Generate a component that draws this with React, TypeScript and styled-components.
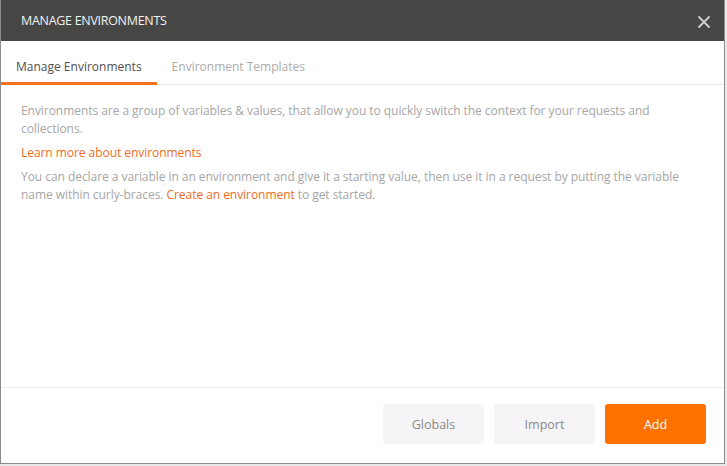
import { createGlobalStyle } from "styled-components";
import styled from "styled-components";
import { useState } from "react";

const GlobalStyle = createGlobalStyle`
  html, body {
    margin: 0;
    padding: 0;
    background: #e9e9ec;
  }
  body {
    font-family: "Open Sans", "Noto Sans", Arial, sans-serif;
  }
  * {
    box-sizing: border-box;
  }
`;

const Modal = styled.div`
  width: 725px;
  height: 464px;
  background: #ffffff;
  border: 1px solid #8c8c8c;
  border-top: none;
  display: flex;
  flex-direction: column;
`;

const Header = styled.div`
  height: 41px;
  flex-shrink: 0;
  background: #464744;
  display: flex;
  align-items: center;
  justify-content: space-between;
  padding: 0 12px 0 20px;
`;

const Title = styled.h1`
  margin: 0;
  font-size: 12.5px;
  font-weight: 400;
  color: #f2f2f2;
  letter-spacing: -0.3px;
`;

const CloseButton = styled.button`
  border: none;
  background: none;
  padding: 0;
  width: 16px;
  height: 16px;
  margin-top: 2px;
  display: flex;
  align-items: center;
  justify-content: center;
  cursor: pointer;
`;

const TabBar = styled.div`
  display: flex;
  border-bottom: 1px solid #e8e8e8;
  flex-shrink: 0;
`;

const Tab = styled.button<{ active?: boolean }>`
  border: none;
  background: none;
  font-family: inherit;
  font-size: 12px;
  padding: 17px 15px 0;
  height: 44px;
  color: ${({ active }) => (active ? "#505050" : "#ababab")};
  border-bottom: 3px solid ${({ active }) => (active ? "#f47023" : "transparent")};
  margin-bottom: -1px;
  display: flex;
  align-items: flex-start;
  cursor: pointer;
`;

const Content = styled.div`
  flex: 1;
  padding: 17px 20px 0 20px;
  font-size: 12px;
  color: #a6a6a6;
  line-height: 18px;
`;

const Paragraph = styled.p`
  margin: 0 0 6px;
  letter-spacing: -0.05px;
`;

const Link = styled.a`
  color: #f26b21;
  text-decoration: none;
  cursor: pointer;
`;

const Footer = styled.div`
  height: 76px;
  flex-shrink: 0;
  border-top: 1px solid #ededed;
  display: flex;
  justify-content: flex-end;
  align-items: flex-start;
  gap: 10px;
  padding: 16px 18px 0 0;
`;

const Button = styled.button<{ primary?: boolean }>`
  width: 101px;
  height: 40px;
  border: none;
  border-radius: 3px;
  font-family: inherit;
  font-size: 12.5px;
  cursor: pointer;
  background: ${({ primary }) => (primary ? "#fc7100" : "#f6f4f6")};
  color: ${({ primary }) => (primary ? "#ffffff" : "#8a8a8a")};
`;

const CloseIcon = () => (
  <svg width="12" height="12" viewBox="0 0 12 12">
    <path d="M1 1 L11 11 M11 1 L1 11" stroke="#cfcfcf" strokeWidth="1.8" strokeLinecap="round" />
  </svg>
);

export default function App() {
  const [tab, setTab] = useState(0);
  return (
    <>
      <GlobalStyle />
      <Modal>
        <Header>
          <Title>MANAGE ENVIRONMENTS</Title>
          <CloseButton aria-label="Close">
            <CloseIcon />
          </CloseButton>
        </Header>
        <TabBar>
          <Tab active={tab === 0} onClick={() => setTab(0)}>
            Manage Environments
          </Tab>
          <Tab active={tab === 1} onClick={() => setTab(1)}>
            Environment Templates
          </Tab>
        </TabBar>
        <Content>
          <Paragraph>
            Environments are a group of variables &amp; values, that allow you to quickly switch the
            context for your requests and collections.
          </Paragraph>
          <Paragraph>
            <Link>Learn more about environments</Link>
          </Paragraph>
          <Paragraph>
            You can declare a variable in an environment and give it a starting value, then use it in
            a request by putting the variable name within curly-braces.{" "}
            <Link>Create an environment</Link> to get started.
          </Paragraph>
        </Content>
        <Footer>
          <Button>Globals</Button>
          <Button>Import</Button>
          <Button primary>Add</Button>
        </Footer>
      </Modal>
    </>
  );
}
